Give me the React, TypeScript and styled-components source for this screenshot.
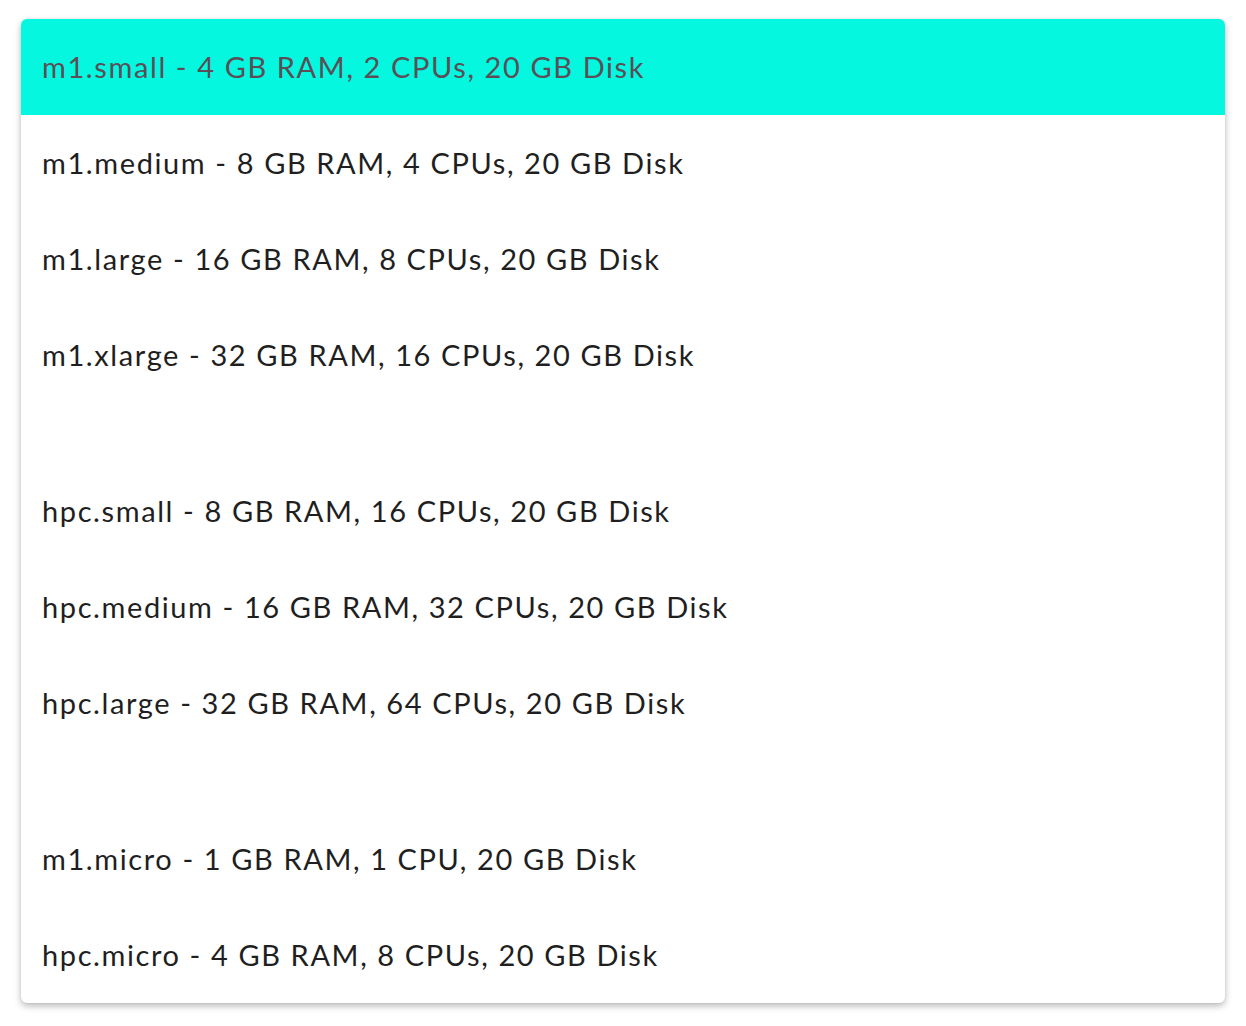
import React from "react";
import styled, { createGlobalStyle } from "styled-components";

const Global = createGlobalStyle`
  html, body { margin: 0; padding: 0; background: #ffffff; }
  body { font-family: Lato, "Open Sans", sans-serif; }
`;

const Page = styled.div`
  padding: 19px 21px 23px 21px;
`;

const Card = styled.ul`
  list-style: none;
  margin: 0;
  padding: 0;
  background: #ffffff;
  border-radius: 6px;
  overflow: hidden;
  box-shadow: 0 3px 7px rgba(0, 0, 0, 0.28), 0 0 2px rgba(0, 0, 0, 0.08);
  display: flex;
  flex-direction: column;
`;

const Option = styled.li<{ $selected?: boolean }>`
  height: 96px;
  display: flex;
  align-items: center;
  padding: 0 21px 2px 21px;
  box-sizing: border-box;
  font-size: 29px;
  letter-spacing: 1.6px;
  color: ${(p) => (p.$selected ? "#5b4e56" : "#1f1f1f")};
  background: ${(p) => (p.$selected ? "#05f7df" : "transparent")};
`;

const Separator = styled.li`
  height: 60px;
`;

type Item = { label: string } | { sep: true };

const items: Item[] = [
  { label: "m1.small - 4 GB RAM, 2 CPUs, 20 GB Disk" },
  { label: "m1.medium - 8 GB RAM, 4 CPUs, 20 GB Disk" },
  { label: "m1.large - 16 GB RAM, 8 CPUs, 20 GB Disk" },
  { label: "m1.xlarge - 32 GB RAM, 16 CPUs, 20 GB Disk" },
  { sep: true },
  { label: "hpc.small - 8 GB RAM, 16 CPUs, 20 GB Disk" },
  { label: "hpc.medium - 16 GB RAM, 32 CPUs, 20 GB Disk" },
  { label: "hpc.large - 32 GB RAM, 64 CPUs, 20 GB Disk" },
  { sep: true },
  { label: "m1.micro - 1 GB RAM, 1 CPU, 20 GB Disk" },
  { label: "hpc.micro - 4 GB RAM, 8 CPUs, 20 GB Disk" },
];

export default function App() {
  return (
    <Page>
      <Global />
      <Card>
        {items.map((it, i) =>
          "sep" in it ? (
            <Separator key={i} />
          ) : (
            <Option key={i} $selected={i === 0}>
              {it.label}
            </Option>
          )
        )}
      </Card>
    </Page>
  );
}
